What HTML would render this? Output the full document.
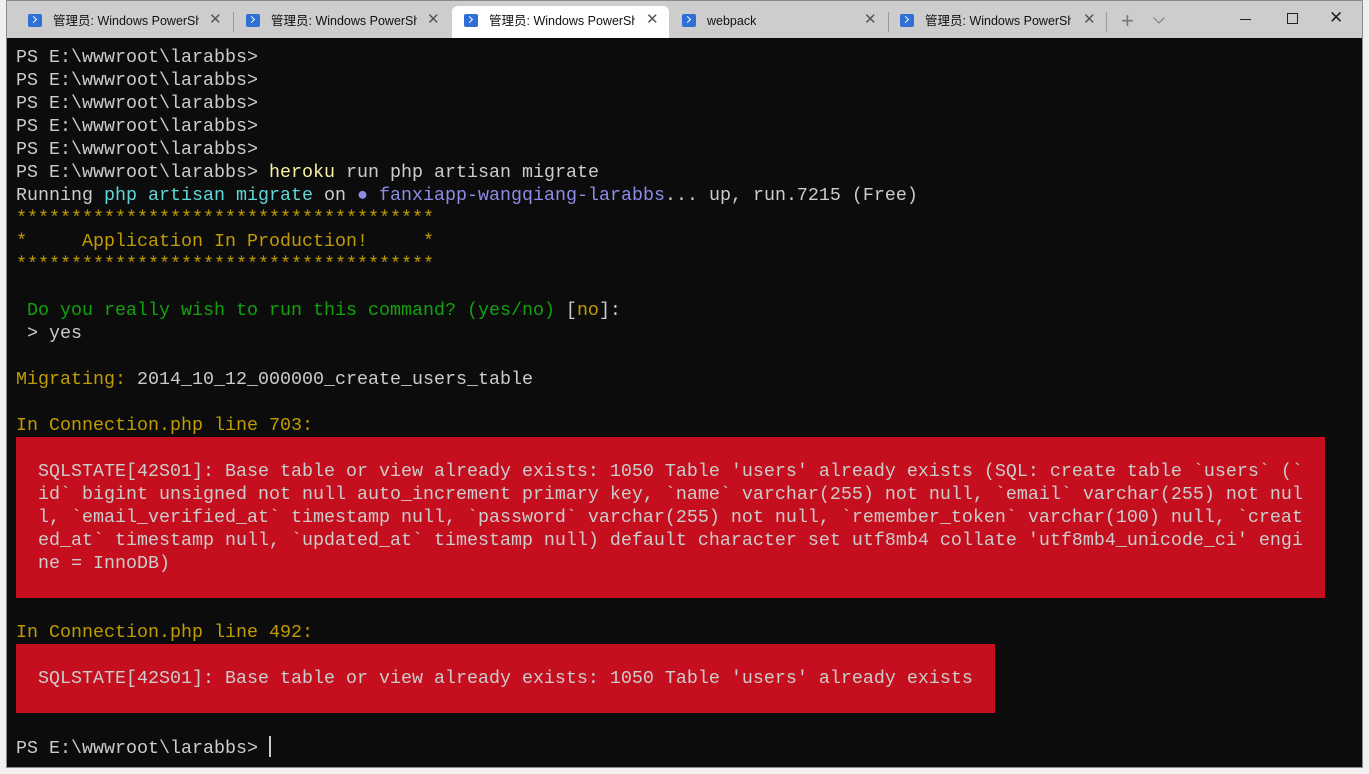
<!DOCTYPE html>
<html><head><meta charset="utf-8"><style>
*{margin:0;padding:0;box-sizing:border-box}
body{width:1369px;height:774px;background:#f0f0f0;overflow:hidden;position:relative;font-family:"Liberation Sans","Noto Sans CJK SC",sans-serif}
.win{position:absolute;left:6px;top:0;width:1357px;height:768px;border:1px solid #8a8a8a;background:#cdcdcd}
.tabbar{position:absolute;left:0;top:0;width:1369px;height:38px}
.act{position:absolute;left:452px;top:6px;width:217px;height:32px;background:#fff;border-radius:6px 6px 0 0}
.ic{position:absolute;top:14px;width:14px;height:13px;background:#2f6fd6;border-radius:2px}
.ic:after{content:"";position:absolute;left:3px;top:3px;width:4px;height:4px;border-right:1.5px solid #fff;border-bottom:1.5px solid #fff;transform:rotate(-45deg)}
.t{position:absolute;top:13px;font-size:12.5px;color:#111;white-space:nowrap;overflow:hidden;line-height:16px}
.x{position:absolute;top:11px;font-size:15px;color:#555;line-height:18px}
.sep{position:absolute;top:12px;width:1px;height:20px;background:#9a9a9a}
.term{position:absolute;left:0;top:37px;width:1355px;height:729px;background:#0c0c0c}
.l{position:absolute;left:9px;font-family:"Liberation Mono",monospace;font-size:18.33px;color:#cccccc;white-space:pre;line-height:23px;height:23px}
.red{position:absolute;background:#c50f1f;left:9px}
.y{color:#c19c00}.g{color:#13a10e}.c{color:#61d6d6}.p{color:#8c8ce6}.h{color:#f9f1a5}
</style></head><body>
<div class="win">
<div class="term">
<div class="red" style="top:399px;width:1309px;height:161px"></div>
<div class="red" style="top:606px;width:979px;height:69px"></div>
<div class="l" style="top:8px">PS E:\wwwroot\larabbs&gt;</div>
<div class="l" style="top:31px">PS E:\wwwroot\larabbs&gt;</div>
<div class="l" style="top:54px">PS E:\wwwroot\larabbs&gt;</div>
<div class="l" style="top:77px">PS E:\wwwroot\larabbs&gt;</div>
<div class="l" style="top:100px">PS E:\wwwroot\larabbs&gt;</div>
<div class="l" style="top:123px">PS E:\wwwroot\larabbs&gt; <span class="h">heroku</span> run php artisan migrate</div>
<div class="l" style="top:146px">Running <span class="c">php artisan migrate</span> on <span class="p">● fanxiapp-wangqiang-larabbs</span>... up, run.7215 (Free)</div>
<div class="l y" style="top:169px">**************************************</div>
<div class="l y" style="top:192px">*     Application In Production!     *</div>
<div class="l y" style="top:215px">**************************************</div>
<div class="l" style="top:261px"> <span class="g">Do you really wish to run this command? (yes/no)</span> [<span class="y">no</span>]:</div>
<div class="l" style="top:284px"> &gt; yes</div>
<div class="l" style="top:330px"><span class="y">Migrating:</span> 2014_10_12_000000_create_users_table</div>
<div class="l y" style="top:376px">In Connection.php line 703:</div>
<div class="l" style="top:422px">  SQLSTATE[42S01]: Base table or view already exists: 1050 Table 'users' already exists (SQL: create table `users` (`</div>
<div class="l" style="top:445px">  id` bigint unsigned not null auto_increment primary key, `name` varchar(255) not null, `email` varchar(255) not nul</div>
<div class="l" style="top:468px">  l, `email_verified_at` timestamp null, `password` varchar(255) not null, `remember_token` varchar(100) null, `creat</div>
<div class="l" style="top:491px">  ed_at` timestamp null, `updated_at` timestamp null) default character set utf8mb4 collate 'utf8mb4_unicode_ci' engi</div>
<div class="l" style="top:514px">  ne = InnoDB)</div>
<div class="l y" style="top:583px">In Connection.php line 492:</div>
<div class="l" style="top:629px">  SQLSTATE[42S01]: Base table or view already exists: 1050 Table 'users' already exists</div>
<div class="l" style="top:698px">PS E:\wwwroot\larabbs&gt; <span style="display:inline-block;width:2px;height:21px;background:#ccc;vertical-align:-4px"></span></div>
</div>
</div>
<div class="tabbar">
<div class="act"></div>
<div class="ic" style="left:28px"></div><span class="t" style="left:53px;width:146px">管理员: Windows PowerShell</span><span class="x" style="left:209px">✕</span>
<div class="sep" style="left:233px"></div>
<div class="ic" style="left:246px"></div><span class="t" style="left:271px;width:146px">管理员: Windows PowerShell</span><span class="x" style="left:427px">✕</span>
<div class="ic" style="left:464px"></div><span class="t" style="left:489px;width:146px">管理员: Windows PowerShell</span><span class="x" style="left:646px">✕</span>
<div class="ic" style="left:682px"></div><span class="t" style="left:707px">webpack</span><span class="x" style="left:864px">✕</span>
<div class="sep" style="left:888px"></div>
<div class="ic" style="left:900px"></div><span class="t" style="left:925px;width:146px">管理员: Windows PowerShell</span><span class="x" style="left:1083px">✕</span>
<div class="sep" style="left:1106px"></div>
<div style="position:absolute;left:1121px;top:8px;font-size:22px;color:#777">+</div>
<div style="position:absolute;left:1155px;top:14px;width:8px;height:8px;border-right:1px solid #777;border-bottom:1px solid #777;transform:rotate(45deg)"></div>
<div style="position:absolute;left:1240px;top:19px;width:11px;height:1px;background:#222"></div>
<div style="position:absolute;left:1287px;top:13px;width:11px;height:11px;border:1px solid #222"></div>
<div style="position:absolute;left:1329px;top:8px;font-size:17px;color:#222">✕</div>
</div>
</body></html>
